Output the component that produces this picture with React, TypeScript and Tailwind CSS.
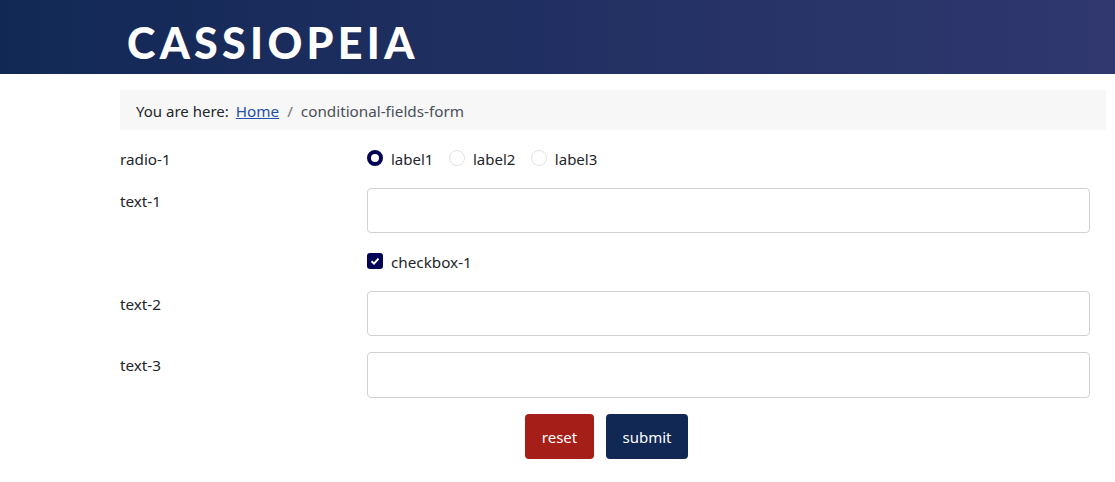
import React from 'react';

const Radio = ({ checked, label }: { checked?: boolean; label: string }) => (
  <label className="flex items-center">
    <span
      className={
        checked
          ? 'w-4 h-4 rounded-full bg-white border-[4px] border-[#010156] mr-2'
          : 'w-4 h-4 rounded-full bg-white border border-[#e3e3e3] mr-2'
      }
    />
    <span className="pt-[2px] text-[15px]">{label}</span>
  </label>
);

const TextRow = ({ label, mt, h }: { label: string; mt: string; h: string }) => (
  <div className={`flex ${mt}`}>
    <div className="w-[247px] pt-px leading-6">{label}</div>
    <input type="text" className={`w-[723px] ${h} rounded border border-[#d1d1d1] bg-white`} />
  </div>
);

export default function App() {
  return (
    <div className="min-h-[482px] bg-white text-[15.25px] text-[#22262a] font-['Noto_Sans',sans-serif]">
      {/* Header */}
      <header className="h-[74px] bg-gradient-to-r from-[#112855] to-[#30386f] pl-[127px] flex items-center">
        <span className="text-white text-[43px] leading-none font-black tracking-[4.3px] font-['Lato',sans-serif] mt-[10px]">
          CASSIOPEIA
        </span>
      </header>

      <main className="pl-[120px] pt-4">
        {/* Breadcrumb */}
        <nav className="w-[986px] h-10 bg-[#f7f7f7] pl-4 flex items-center">
          <span className="pt-[2px] text-[15px]">You are here:</span>
          <a href="#" className="pt-[2px] ml-[7px] text-[#224faa] underline">Home</a>
          <span className="pt-[2px] mx-2 text-[#6d757e]">/</span>
          <span className="pt-[2px] text-[#495057]">conditional-fields-form</span>
        </nav>

        {/* Form */}
        <form>
          <div className="flex mt-4 h-6 items-center">
            <div className="w-[247px] pt-[2px]">radio-1</div>
            <div className="flex gap-[15.5px]">
              <Radio checked label="label1" />
              <Radio label="label2" />
              <Radio label="label3" />
            </div>
          </div>

          <TextRow label="text-1" mt="mt-[18px]" h="h-[45px]" />

          <div className="flex items-center mt-4 h-6 pl-[247px]">
            <span className="w-4 h-4 rounded-[3px] bg-[#010156] mr-2 flex items-center justify-center">
              <svg width="10" height="10" viewBox="0 0 10 10" fill="none">
                <path d="M1.5 5.2 L4 7.6 L8.5 2.6" stroke="white" strokeWidth="2" />
              </svg>
            </span>
            <span className="pt-[2px]">checkbox-1</span>
          </div>

          <TextRow label="text-2" mt="mt-[18px]" h="h-[45px]" />
          <TextRow label="text-3" mt="mt-4" h="h-[46px]" />

          <div className="flex justify-center gap-3 mt-4 w-[973px]">
            <button type="button" className="h-[45px] w-[69px] pt-[2px] text-[15px] rounded bg-[#a51f18] text-white">reset</button>
            <button type="button" className="h-[45px] w-[82px] pt-[2px] text-[15px] rounded bg-[#112855] text-white">submit</button>
          </div>
        </form>
      </main>
    </div>
  );
}
